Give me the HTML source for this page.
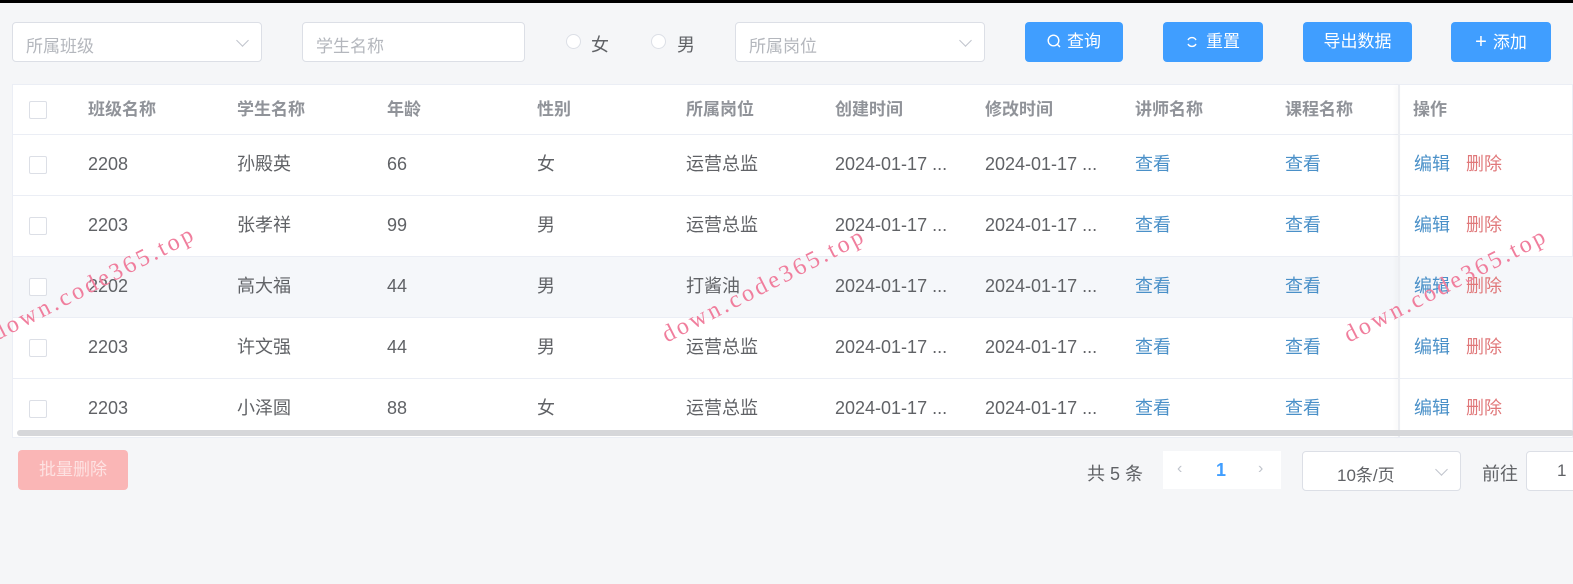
<!DOCTYPE html>
<html><head><meta charset="utf-8"><style>
*{box-sizing:border-box;margin:0;padding:0}
body{width:1573px;height:584px;background:#f5f6f8;font-family:"Liberation Sans","Noto Sans CJK SC",sans-serif;position:relative;overflow:hidden;color:#606266}
.a{position:absolute}
.inp{position:absolute;top:22px;height:40px;background:#fff;border:1px solid #dcdfe6;border-radius:4px;font-size:17px;color:#b4b7bd;padding:9px 13px}
.chev{position:absolute;right:14px;top:13px;width:9px;height:9px;border-right:1.5px solid #c0c4cc;border-bottom:1.5px solid #c0c4cc;transform:rotate(45deg)}
.btn{position:absolute;top:22px;height:40px;background:#409eff;border-radius:4px;color:#fff;font-size:17px;text-align:center;line-height:40px}
.radio{position:absolute;top:34px;width:15px;height:15px;border:1px solid #dcdfe6;border-radius:50%;background:#fff}
.tbl{position:absolute;left:12px;top:84px;width:1561px;height:354px;background:#fff;border:1px solid #ebeef5}
.row{position:absolute;left:0;width:1561px;height:61px;border-bottom:1px solid #ebeef5}
.c{position:absolute;font-size:18px;line-height:20px}
.h{font-weight:bold;color:#909399;font-size:17px}
.cb{position:absolute;left:16px;width:18px;height:18px;border:1px solid #dcdfe6;border-radius:2px;background:#fff}
.blue{color:#4a90c8}.red{color:#e0787a}
.wm{position:absolute;color:#f07e9d;font-family:"Liberation Serif",serif;font-size:24px;letter-spacing:3px;transform:rotate(-27deg);transform-origin:left bottom;white-space:nowrap}
</style></head><body>
<div class="a" style="left:0;top:0;width:1573px;height:3px;background:#000"></div>
<div class="inp" style="left:12px;width:250px">所属班级<div class="chev"></div></div>
<div class="inp" style="left:302px;width:223px">学生名称</div>
<div class="radio" style="left:566px"></div><div class="a" style="left:591px;top:31px;font-size:18px;color:#606266">女</div>
<div class="radio" style="left:651px"></div><div class="a" style="left:677px;top:31px;font-size:18px;color:#606266">男</div>
<div class="inp" style="left:735px;width:250px">所属岗位<div class="chev"></div></div>
<div class="btn" style="left:1025px;width:98px"><svg width="14" height="14" viewBox="0 0 14 14" style="vertical-align:-1px;margin-right:6px"><circle cx="6.5" cy="6.5" r="5.3" fill="none" stroke="#fff" stroke-width="1.4"/><path d="M10.5 10.5L13 13" stroke="#fff" stroke-width="1.4"/></svg>查询</div>
<div class="btn" style="left:1163px;width:100px"><svg width="12" height="12" viewBox="0 0 12 12" style="vertical-align:-1px;margin-right:8px"><path d="M10 4A4.5 4.5 0 0 0 2 4M2 8a4.5 4.5 0 0 0 8 0" fill="none" stroke="#fff" stroke-width="1.4"/></svg>重置</div>
<div class="btn" style="left:1303px;width:109px">导出数据</div>
<div class="btn" style="left:1451px;width:100px"><span style="font-size:20px;margin-right:6px">+</span>添加</div>

<div class="tbl">
<div class="row" style="top:0;height:50px"><div class="cb" style="top:16px"></div>
<div class="c h" style="left:75px;top:15px">班级名称</div><div class="c h" style="left:224px;top:15px">学生名称</div><div class="c h" style="left:374px;top:15px">年龄</div><div class="c h" style="left:524px;top:15px">性别</div><div class="c h" style="left:673px;top:15px">所属岗位</div><div class="c h" style="left:822px;top:15px">创建时间</div><div class="c h" style="left:972px;top:15px">修改时间</div><div class="c h" style="left:1122px;top:15px">讲师名称</div><div class="c h" style="left:1272px;top:15px">课程名称</div><div class="c h" style="left:1400px;top:15px">操作</div></div>
<div class="row" style="top:50px"><div class="cb" style="top:21px"></div><div class="c" style="left:75px;top:19px">2208</div><div class="c" style="left:224px;top:19px">孙殿英</div><div class="c" style="left:374px;top:19px">66</div><div class="c" style="left:524px;top:19px">女</div><div class="c" style="left:673px;top:19px">运营总监</div><div class="c" style="left:822px;top:19px">2024-01-17 ...</div><div class="c" style="left:972px;top:19px">2024-01-17 ...</div><div class="c blue" style="left:1122px;top:19px">查看</div><div class="c blue" style="left:1272px;top:19px">查看</div><div class="c blue" style="left:1401px;top:19px">编辑</div><div class="c red" style="left:1453px;top:19px">删除</div></div>
<div class="row" style="top:111px"><div class="cb" style="top:21px"></div><div class="c" style="left:75px;top:19px">2203</div><div class="c" style="left:224px;top:19px">张孝祥</div><div class="c" style="left:374px;top:19px">99</div><div class="c" style="left:524px;top:19px">男</div><div class="c" style="left:673px;top:19px">运营总监</div><div class="c" style="left:822px;top:19px">2024-01-17 ...</div><div class="c" style="left:972px;top:19px">2024-01-17 ...</div><div class="c blue" style="left:1122px;top:19px">查看</div><div class="c blue" style="left:1272px;top:19px">查看</div><div class="c blue" style="left:1401px;top:19px">编辑</div><div class="c red" style="left:1453px;top:19px">删除</div></div>
<div class="row" style="top:172px;background:#f5f7fa"><div class="cb" style="top:21px"></div><div class="c" style="left:75px;top:19px">2202</div><div class="c" style="left:224px;top:19px">高大福</div><div class="c" style="left:374px;top:19px">44</div><div class="c" style="left:524px;top:19px">男</div><div class="c" style="left:673px;top:19px">打酱油</div><div class="c" style="left:822px;top:19px">2024-01-17 ...</div><div class="c" style="left:972px;top:19px">2024-01-17 ...</div><div class="c blue" style="left:1122px;top:19px">查看</div><div class="c blue" style="left:1272px;top:19px">查看</div><div class="c blue" style="left:1401px;top:19px">编辑</div><div class="c red" style="left:1453px;top:19px">删除</div></div>
<div class="row" style="top:233px"><div class="cb" style="top:21px"></div><div class="c" style="left:75px;top:19px">2203</div><div class="c" style="left:224px;top:19px">许文强</div><div class="c" style="left:374px;top:19px">44</div><div class="c" style="left:524px;top:19px">男</div><div class="c" style="left:673px;top:19px">运营总监</div><div class="c" style="left:822px;top:19px">2024-01-17 ...</div><div class="c" style="left:972px;top:19px">2024-01-17 ...</div><div class="c blue" style="left:1122px;top:19px">查看</div><div class="c blue" style="left:1272px;top:19px">查看</div><div class="c blue" style="left:1401px;top:19px">编辑</div><div class="c red" style="left:1453px;top:19px">删除</div></div>
<div class="row" style="top:294px;border:none"><div class="cb" style="top:21px"></div><div class="c" style="left:75px;top:19px">2203</div><div class="c" style="left:224px;top:19px">小泽圆</div><div class="c" style="left:374px;top:19px">88</div><div class="c" style="left:524px;top:19px">女</div><div class="c" style="left:673px;top:19px">运营总监</div><div class="c" style="left:822px;top:19px">2024-01-17 ...</div><div class="c" style="left:972px;top:19px">2024-01-17 ...</div><div class="c blue" style="left:1122px;top:19px">查看</div><div class="c blue" style="left:1272px;top:19px">查看</div><div class="c blue" style="left:1401px;top:19px">编辑</div><div class="c red" style="left:1453px;top:19px">删除</div></div>
<div class="a" style="left:1385px;top:0;width:2px;height:352px;background:#eceef2;box-shadow:-2px 0 4px rgba(0,0,0,.05)"></div>
<div class="a" style="left:4px;top:345px;width:1557px;height:6px;background:#d6d7da;border-radius:3px"></div>
</div>

<div class="a" style="left:18px;top:450px;width:110px;height:40px;background:#fab6b6;border-radius:4px;color:#fde2e2;font-size:17px;text-align:center;line-height:40px">批量删除</div>
<div class="a" style="left:1087px;top:460px;font-size:18px;color:#606266">共 5 条</div>
<div class="a" style="left:1163px;top:451px;width:118px;height:38px;background:#fff"></div>
<div class="a" style="left:1177px;top:460px;font-size:16px;color:#c0c4cc">‹</div>
<div class="a" style="left:1216px;top:460px;font-size:18px;font-weight:bold;color:#409eff">1</div>
<div class="a" style="left:1258px;top:460px;font-size:16px;color:#c0c4cc">›</div>
<div class="inp" style="left:1302px;top:451px;height:40px;width:159px;color:#606266;padding-left:34px">10条/页<div class="chev"></div></div>
<div class="a" style="left:1482px;top:460px;font-size:18px;color:#606266">前往</div>
<div class="inp" style="left:1526px;top:451px;height:40px;width:60px;color:#606266;padding-left:30px">1</div>

<div class="wm" style="left:0px;top:320px">down.code365.top</div>
<div class="wm" style="left:670px;top:322px">down.code365.top</div>
<div class="wm" style="left:1352px;top:322px">down.code365.top</div>
</body></html>
